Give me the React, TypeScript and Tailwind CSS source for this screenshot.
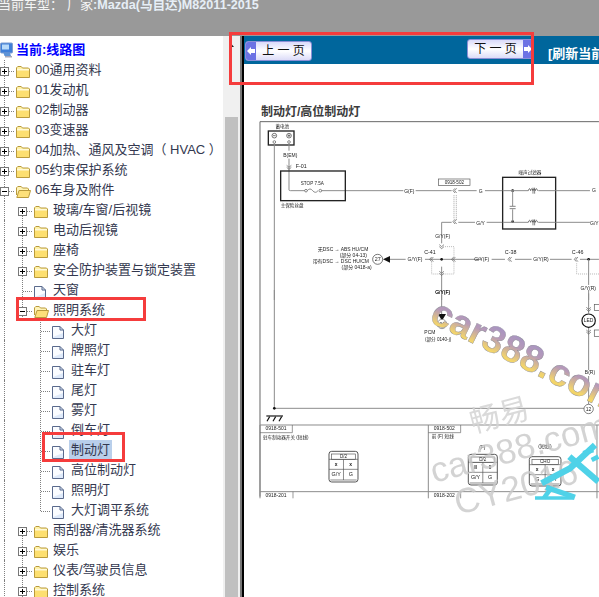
import React from "react";

type Kind = "plus" | "minus" | "leaf";
type Row = { level: 0 | 1 | 2; kind: Kind; icon: "folder" | "open" | "page"; text: string; last?: boolean; selected?: boolean };

const rows: Row[] = [
  { level: 0, kind: "plus", icon: "folder", text: "00通用资料" },
  { level: 0, kind: "plus", icon: "folder", text: "01发动机" },
  { level: 0, kind: "plus", icon: "folder", text: "02制动器" },
  { level: 0, kind: "plus", icon: "folder", text: "03变速器" },
  { level: 0, kind: "plus", icon: "folder", text: "04加热、通风及空调（ HVAC ）" },
  { level: 0, kind: "plus", icon: "folder", text: "05约束保护系统" },
  { level: 0, kind: "minus", icon: "open", text: "06车身及附件" },
  { level: 1, kind: "plus", icon: "folder", text: "玻璃/车窗/后视镜" },
  { level: 1, kind: "plus", icon: "folder", text: "电动后视镜" },
  { level: 1, kind: "plus", icon: "folder", text: "座椅" },
  { level: 1, kind: "plus", icon: "folder", text: "安全防护装置与锁定装置" },
  { level: 1, kind: "leaf", icon: "page", text: "天窗" },
  { level: 1, kind: "minus", icon: "open", text: "照明系统" },
  { level: 2, kind: "leaf", icon: "page", text: "大灯" },
  { level: 2, kind: "leaf", icon: "page", text: "牌照灯" },
  { level: 2, kind: "leaf", icon: "page", text: "驻车灯" },
  { level: 2, kind: "leaf", icon: "page", text: "尾灯" },
  { level: 2, kind: "leaf", icon: "page", text: "雾灯" },
  { level: 2, kind: "leaf", icon: "page", text: "倒车灯" },
  { level: 2, kind: "leaf", icon: "page", text: "制动灯", selected: true },
  { level: 2, kind: "leaf", icon: "page", text: "高位制动灯" },
  { level: 2, kind: "leaf", icon: "page", text: "照明灯" },
  { level: 2, kind: "leaf", icon: "page", text: "大灯调平系统", last: true },
  { level: 1, kind: "plus", icon: "folder", text: "雨刮器/清洗器系统" },
  { level: 1, kind: "plus", icon: "folder", text: "娱乐" },
  { level: 1, kind: "plus", icon: "folder", text: "仪表/驾驶员信息" },
  { level: 1, kind: "plus", icon: "folder", text: "控制系统" },
];

function Folder() {
  return (
    <svg width="14" height="12" viewBox="0 0 14 12" className="block shrink-0">
      <path d="M.5 3V1.8L1.8.5h3.4l1.3 1.5h6L13.5 3v8.5H.5z" fill="#fff2a8" stroke="#b99a3c" />
      <rect x="1" y="4" width="12" height="7" fill="#fddf70" />
      <rect x="1" y="3" width="12" height="1.5" fill="#fff9d8" />
    </svg>
  );
}
function OpenFolder() {
  return (
    <svg width="15" height="12" viewBox="0 0 15 12" className="block shrink-0">
      <path d="M.5 9V1.8L1.8.5h3.4l1.3 1.5h5l1 1V4" fill="#fff4b8" stroke="#b99a3c" />
      <path d="M.8 11.5 3 4.5h11.5l-2 7z" fill="#fde07a" stroke="#b99a3c" />
    </svg>
  );
}
function Page() {
  return (
    <svg width="12" height="13" viewBox="0 0 12 13" className="block shrink-0">
      <path d="M.5.5h7.5l3.5 3.5v8.5H.5z" fill="#dfeafa" stroke="#5a6a8c" />
      <path d="M1 1h6.8v3.4h3.2V7L1 11z" fill="#fff" opacity=".85" />
      <path d="M8 .5V4h3.5" fill="none" stroke="#5a6a8c" />
    </svg>
  );
}
function Computer() {
  return (
    <svg width="14" height="16" viewBox="0 0 14 16" className="block shrink-0">
      <rect x=".5" y="1" width="12" height="10" rx="1" fill="#3f7fd8" stroke="#7f9fd0" />
      <rect x="2" y="2.5" width="7" height="5" fill="#b9dbfa" />
      <path d="M3.5 11h6.5l1 3H4.5z" fill="#5d93d6" />
      <path d="M5 14h7v1.5H5z" fill="#a8a8b8" />
    </svg>
  );
}

function Connector({ kind, last, top = true }: { kind: Kind; last?: boolean; top?: boolean }) {
  const dots = "#808080";
  return (
    <svg width="15" height="20" viewBox="0 0 15 20" className="block shrink-0">
      <path d={`M4.5 ${top ? 0 : 10}V${last ? 11 : 20}`} stroke={dots} strokeDasharray="1 1" fill="none" />
      <path d="M5 11.5H15" stroke={dots} strokeDasharray="1 1" fill="none" />
      {kind !== "leaf" && (
        <>
          <rect x=".5" y="7.5" width="8" height="8" fill="#fff" stroke="#777" />
          <path d="M2 11.5h5" stroke="#000" />
          {kind === "plus" && <path d="M4.5 9v5" stroke="#000" />}
        </>
      )}
    </svg>
  );
}

function TreeRow({ r, index }: { r: Row; index: number }) {
  const noLevel1Guide = r.level === 1 && index > 0 && rows[index - 1].level === 2;
  return (
    <div className="flex h-5 items-stretch">
      {r.level >= 1 && (
        <div className="h-5 w-[18px] shrink-0 pl-[4px]">
          <div className="h-5 border-l border-dotted border-[#808080]" />
        </div>
      )}
      {r.level === 2 && <div className="h-5 w-[18px] shrink-0" />}
      <Connector kind={r.kind} last={r.last} top={!noLevel1Guide && !(r.level === 1 && r.text === "玻璃/车窗/后视镜")} />
      <div className="flex h-5 w-[2px] shrink-0" />
      <div className="mt-[6px] -ml-[1px] flex w-[19px] shrink-0">
        {r.icon === "folder" ? <Folder /> : r.icon === "open" ? <OpenFolder /> : <Page />}
      </div>
      <span
        className={`-ml-[2px] h-[19px] whitespace-nowrap px-[2px] text-[13px] leading-[20px] text-[#33384f] ${r.selected ? "bg-[#b9cfeb]" : ""}`}
      >
        {r.text}
      </span>
    </div>
  );
}

function NavButton({ label, side, className }: { label: string; side: "left" | "right"; className: string }) {
  const arrow = (
    <div className="flex h-full w-[10px] items-center justify-center bg-[#6c72e4]">
      <svg width="8" height="8" viewBox="0 0 8 8">
        {side === "left" ? <path d="M0 4l4-4v2h4v4H4v2z" fill="#fff" /> : <path d="M8 4L4 0v2H0v4h4v2z" fill="#fff" />}
      </svg>
    </div>
  );
  return (
    <div
      className={`flex h-[20px] w-[67px] shrink-0 items-center overflow-hidden rounded-[3px] border border-[#8b8fd6] bg-linear-to-b from-[#d9dafa] via-white to-[#dcdcf8] ${className}`}
    >
      {side === "left" && arrow}
      <span className="flex-1 text-center text-[12px] leading-none whitespace-nowrap text-[#111]">{label}</span>
      {side === "right" && arrow}
    </div>
  );
}

const G = "#8c8c8c";
function T({ x, y, s = 13, a = "middle", w, c = "#222", children }: { x: number; y: number; s?: number; a?: "start" | "middle" | "end"; w?: number; c?: string; children: React.ReactNode }) {
  return (
    <text x={x} y={y} fontSize={s * 1.15} textAnchor={a} fontWeight={w} fill={c}>
      {children}
    </text>
  );
}
function L({ d, c = G, w = 3, dash }: { d: string; c?: string; w?: number; dash?: string }) {
  return <path d={d} stroke={c} strokeWidth={w} fill="none" strokeDasharray={dash} />;
}
function Conn({ x, y, v }: { x: number; y: number; v?: boolean }) {
  return v ? (
    <L d={`M${x - 7} ${y - 4}L${x} ${y + 2}L${x + 7} ${y - 4}M${x - 7} ${y + 2}L${x} ${y + 8}L${x + 7} ${y + 2}`} c="#555" w={2} />
  ) : (
    <L d={`M${x + 4} ${y - 7}L${x - 2} ${y}L${x + 4} ${y + 7}M${x + 9} ${y - 7}L${x + 3} ${y}L${x + 9} ${y + 7}`} c="#555" w={2} />
  );
}
function Dot({ x, y, r = 4 }: { x: number; y: number; r?: number }) {
  return <circle cx={x} cy={y} r={r} fill="#111" />;
}
function Coil({ x, y }: { x: number; y: number }) {
  return (
    <>
      <L d={`M${x - 15} ${y}q4 -12 7 0q3 -12 7 0q3 -12 7 0q3 -12 7 0`} c="#555" w={2.5} />
      <L d={`M${x - 1} ${y - 9}V${y + 9}M${x + 4} ${y - 9}V${y + 9}`} c="#444" w={2} />
    </>
  );
}

function ConnectorBox({ x, y, w, h, cells, top }: { x: number; y: number; w: number; h: number; cells: string[]; top: string }) {
  const mx = x + w / 2;
  return (
    <>
      <rect x={x} y={y} width={w} height={h} rx={8} fill="#fff" stroke="#555" strokeWidth={3} />
      <rect x={x + 8} y={y + 8} width={w - 16} height={16} fill="#fff" stroke="#555" strokeWidth={2} />
      <T x={mx} y={y + 20} s={12}>{top}</T>
      <L d={`M${x} ${y + 24}H${x + w}M${mx} ${y + 24}V${y + h - 6}M${x} ${y + 54}H${x + w}M${x + 4} ${y + h - 6}H${x + w - 4}`} c="#555" w={2} />
      <T x={x + w / 4} y={y + 43} w={700}>{cells[0]}</T>
      <T x={x + (3 * w) / 4} y={y + 43} w={700}>{cells[1]}</T>
      <T x={x + w / 4} y={y + 73} s={14}>{cells[2]}</T>
      <T x={x + (3 * w) / 4} y={y + 73} s={14}>{cells[3]}</T>
    </>
  );
}

function Diagram() {
  return (
    <svg
      width="355"
      height="400"
      viewBox="244 121 355 400"
      className="block overflow-visible blur-[0.4px]"
      fontFamily="'Liberation Sans','Noto Sans CJK SC',sans-serif"
    >
      <defs>
        <linearGradient id="wm" x1="0" y1="0" x2="0.08" y2="1" spreadMethod="repeat">
          <stop offset="0" stopColor="#9a8fc8" />
          <stop offset="0.45" stopColor="#b79ab8" />
          <stop offset="0.8" stopColor="#f4d66a" />
          <stop offset="1" stopColor="#e8c85a" />
        </linearGradient>
      </defs>

      <g transform="translate(255 120) scale(.3333)">
        <L d="M15 5H1032M15 5V1130" c="#666" />
        <rect x="40" y="33" width="77" height="42" fill="none" stroke="#222" strokeWidth={4} />
        <T x={82} y={24} s={12}>蓄电池</T>
        <circle cx="58" cy="47" r="7" fill="none" stroke="#333" strokeWidth={2} />
        <circle cx="102" cy="47" r="7" fill="none" stroke="#333" strokeWidth={2} />
        <L d="M54 47h8M98 47h8M102 43v8" c="#333" w={2} />
        <circle cx="58" cy="66" r="4" fill="none" stroke="#555" strokeWidth={2} />
        <circle cx="102" cy="66" r="4" fill="none" stroke="#555" strokeWidth={2} />
        <L d="M58 70V540" />
        <L d="M102 70V92M102 116V210Q102 212 106 212H150M200 212H445" />
        <T x={106} y={110}>B(EM)</T>
        <Conn x={102} y={140} v />
        <T x={122} y={143} a="start" s={14}>F-01</T>
        <rect x="77" y="153" width="194" height="89" fill="none" stroke="#222" strokeWidth={4} />
        <T x={172} y={195} s={12}>STOP  7.5A</T>
        <L d="M150 212h5M195 212h5" c="#555" />
        <circle cx="153" cy="212" r="4" fill="#fff" stroke="#555" strokeWidth={2} />
        <circle cx="196" cy="212" r="4" fill="#fff" stroke="#555" strokeWidth={2} />
        <L d="M157 212q8 -10 16 0t16 0" c="#555" w={2} />
        <T x={77} y={260} a="start" s={12}>主保险丝盘</T>

        <T x={463} y={220}>G(F)</T>
        <L d="M482 212H590M610 212H665M690 212H742" />
        <rect x="551" y="177" width="94" height="20" fill="#fff" stroke="#555" strokeWidth={2} />
        <T x={598} y={192} s={12}>0918-502</T>
        <Conn x={596} y={212} />
        <T x={677} y={218}>G</T>
        <L d="M597 225V298M604 225V298" c="#999" w={2} dash="4 2" />
        <Conn x={596} y={305} />
        <L d="M610 307H660M695 307H742" />
        <L d="M590 307H560V370M560 440V540" />
        <T x={677} y={314}>G/Y</T>
        <rect x="743" y="172" width="159" height="155" fill="#fff" stroke="#222" strokeWidth={4} />
        <T x={825} y={163} s={12}>噪声过滤器</T>
        <Dot x={773} y={212} />
        <Dot x={773} y={305} />
        <L d="M773 212V258M773 268V305M743 212H820M850 212H902M743 307H820M850 307H902" />
        <L d="M764 259H782M764 266H782" c="#444" w={2} />
        <Coil x={835} y={212} />
        <Coil x={835} y={307} />
        <L d="M902 212H1005M902 307H1005" />
        <T x={1017} y={217}>G</T>
        <T x={1018} y={314}>G/Y</T>

        <T x={563} y={354}>G/Y(F)</T>
        <T x={525} y={401} s={14}>C-41</T>
        <L d="M405 418H452M510 418H680M710 418H750M780 418H830M885 418H950M975 418H1032" />
        <path d="M384 418L405 408V428Z" fill="#111" />
        <circle cx="368" cy="418" r="15" fill="#fff" stroke="#333" strokeWidth={2} />
        <T x={368} y={423} s={14}>27</T>
        <T x={480} y={424}>G/Y(F)</T>
        <Conn x={526} y={418} />
        <Dot x={560} y={418} />
        <Conn x={592} y={418} />
        <Conn x={560} y={378} v />
        <Conn x={560} y={458} v />
        <L d="M530 425V462H597V380H568" c="#aaa" w={2.5} dash="3 3" />
        <T x={680} y={424}>G/Y(F)</T>
        <T x={767} y={402} s={14}>C-38</T>
        <Conn x={761} y={418} />
        <T x={858} y={424}>G/Y(R)</T>
        <T x={968} y={402} s={14}>C-46</T>
        <Conn x={960} y={418} />
        <Dot x={1001} y={418} />
        <L d="M965 430V462H1032" c="#aaa" w={2.5} dash="3 3" />
        <L d="M1001 418V495M1001 520V540" />
        <T x={1000} y={511}>G/Y(R)</T>
        <T x={563} y={523}>G/Y(F)</T>
        <T x={340} y={393} a="end">无DSC → ABS HU/CM</T>
        <T x={336} y={411} a="end">(部分 04-13)</T>
        <T x={342} y={429} a="end">带有DSC → DSC HU/CM</T>
        <T x={350} y={448} a="end">(部分 0418-a)</T>
      </g>

      <g transform="translate(255 290) scale(.3333)">
        <L d="M58 0V355M58 355H988" />
        <Dot x={58} y={355} />
        <L d="M560 14V72" />
        <T x={563} y={12}>G/Y(F)</T>
        <path d="M549 72H573L561 92Z" fill="#111" />
        <circle cx="561" cy="102" r="14" fill="#fff" stroke="#666" strokeWidth={2} />
        <T x={561} y={107} s={12}>24</T>
        <T x={508} y={132} a="start">PCM</T>
        <T x={510} y={152} a="start" s={12}>(部分 0140-j)</T>
        <L d="M1001 0V70M1001 114V240M1001 258V343" />
        <circle cx="1001" cy="92" r="20" fill="#fff" stroke="#111" strokeWidth={3.5} />
        <T x={1001} y={97} s={13}>LED</T>
        <Conn x={1001} y={56} v />
        <Conn x={1001} y={124} v />
        <rect x="1018" y="43" width="20" height="19" fill="#fff" stroke="#555" strokeWidth={2} />
        <rect x="1018" y="120" width="20" height="19" fill="#fff" stroke="#555" strokeWidth={2} />
        <T x={1005} y={252}>B(R)</T>
        <circle cx="1001" cy="357" r="14" fill="#fff" stroke="#444" strokeWidth={2} />
        <T x={1001} y={362} s={13}>12</T>
        <L d="M34 378H84" c="#111" w={3.5} />
        <L d="M44 380L36 394M62 380L54 394M80 380L72 394" c="#111" w={3.5} />
      </g>

      <g transform="translate(255 420) scale(.3333)">
        <L d="M15 15H1032M15 215H1032M520 15V235M1026 15V235M15 15V235" />
        <L d="M112 15V38H15M617 15V38H520M114 215V235M617 215V235" c="#666" w={2} />
        <T x={63} y={31} s={13}>0918-501</T>
        <T x={568} y={31} s={13}>0918-502</T>
        <T x={63} y={231} s={13}>0918-201</T>
        <T x={568} y={231} s={13}>0918-202</T>
        <T x={24} y={56} a="start" s={12}>驻车制动器开关 (短线)</T>
        <T x={530} y={54} a="start" s={12}>前 (F) 短线</T>
        <T x={682} y={86} s={13}>(F)</T>
        <T x={870} y={84} s={13}>(短线)</T>
        <ConnectorBox x={222} y={94} w={87} h={92} top="D/2" cells={["x", "x", "G/Y", "G"]} />
        <ConnectorBox x={640} y={103} w={87} h={92} top="D/2" cells={["II", "II", "G/Y", "G"]} />
        <ConnectorBox x={823} y={110} w={95} h={88} top="CHO" cells={["x", "x", "G", "G/Y"]} />
      </g>

      <g fontFamily="'Liberation Sans','Noto Sans CJK SC',sans-serif">
        <text x="428" y="321" fontSize="38" fontWeight="700" fill="url(#wm)" stroke="#8b8b95" strokeWidth=".4" transform="rotate(26.6 428 321)">car388.com</text>
        <text x="473" y="433" fontSize="30" fill="#d4d4d4" opacity=".85" transform="rotate(-15 473 433)">畅易</text>
        <text x="434" y="483" fontSize="35" fill="#c9c9c9" opacity=".8" transform="rotate(-15 434 483)">car388.com</text>
        <text x="458" y="515" fontSize="35" fill="#c9c9c9" opacity=".8" transform="rotate(-15 458 515)">CY2016</text>
      </g>
      <g transform="translate(420 400) scale(.3333)" stroke="#4fd2e8" fill="none" strokeLinecap="butt">
        <path d="M365 250L450 205L525 135" strokeWidth="19" />
        <path d="M448 170L535 245" strokeWidth="19" />
        <path d="M490 160L520 150" strokeWidth="14" />
        <path d="M378 262L465 292" strokeWidth="16" />
        <path d="M345 294H462" strokeWidth="10" />
        <path d="M395 262L372 294" strokeWidth="14" />
        <path d="M515 180L535 170" strokeWidth="14" />
      </g>
    </svg>
  );
}

export default function App() {
  return (
    <div className="relative h-[597px] w-[599px] overflow-hidden bg-white font-['Liberation_Sans','Noto_Sans_CJK_SC',sans-serif]">
      <header className="h-9 overflow-hidden bg-[#999999]">
        <div className="-mt-[3px] -ml-[2px] flex text-[13px] leading-[16px] whitespace-nowrap text-[#f4f4f4]">
          <span className="w-[69px]">当前车型：</span>
          <span className="w-[13px]">厂</span>
          <span className="w-[13px]">家</span>
          <span className="text-[12.6px] font-bold text-[#e6eef6]">:Mazda(马自达)M82011-2015</span>
        </div>
      </header>

      <div className="flex h-[561px]">
        <nav className="w-[223px] shrink-0 overflow-hidden pt-1">
          <div className="flex h-5 items-center">
            <Computer />
            <span className="ml-[2px] text-[13px] leading-5 font-bold whitespace-nowrap text-[#0000ff]">当前:线路图</span>
          </div>
          {rows.map((r, i) => (
            <TreeRow key={r.text} r={r} index={i} />
          ))}
        </nav>

        <div className="flex w-[17px] shrink-0 flex-col bg-[#f0f0f0] pr-[2px] pl-[2px]">
          <div className="flex h-[81px] shrink-0 justify-center pt-[8px]">
            <svg width="5" height="3" viewBox="0 0 5 3">
              <path d="M2.5 0L5 3H0z" fill="#222" />
            </svg>
          </div>
          <div className="flex-1 bg-[#c0c0c0]" />
        </div>
        <div className="w-[4px] shrink-0 border-r-2 border-black bg-[#777]" />

        <main className="min-w-0 flex-1 overflow-hidden">
          <div className="flex h-7 items-start bg-[#00669c]">
            <NavButton label="上 一 页" side="left" className="mt-[5px] ml-[1px]" />
            <NavButton label="下 一 页" side="right" className="mt-[3px] ml-[155px]" />
            <span className="mt-[10px] ml-[14px] text-[13px] leading-[16px] font-bold whitespace-nowrap text-white">[刷新当前页面]</span>
          </div>
          <div className="pt-[40px] pl-[17px] text-[12px] leading-[17px] font-bold text-[#3a3a3a]">制动灯/高位制动灯</div>
          <Diagram />
        </main>
      </div>

      <div className="absolute top-[32px] left-[229px] h-[53px] w-[305px] border-[3px] border-[#f53c3c]" />
      <div className="absolute top-[297px] left-[16px] h-[24px] w-[130px] border-[3px] border-[#f53c3c]" />
      <div className="absolute top-[432px] left-[42px] h-[30px] w-[83px] border-[3px] border-[#f53c3c]" />
    </div>
  );
}
